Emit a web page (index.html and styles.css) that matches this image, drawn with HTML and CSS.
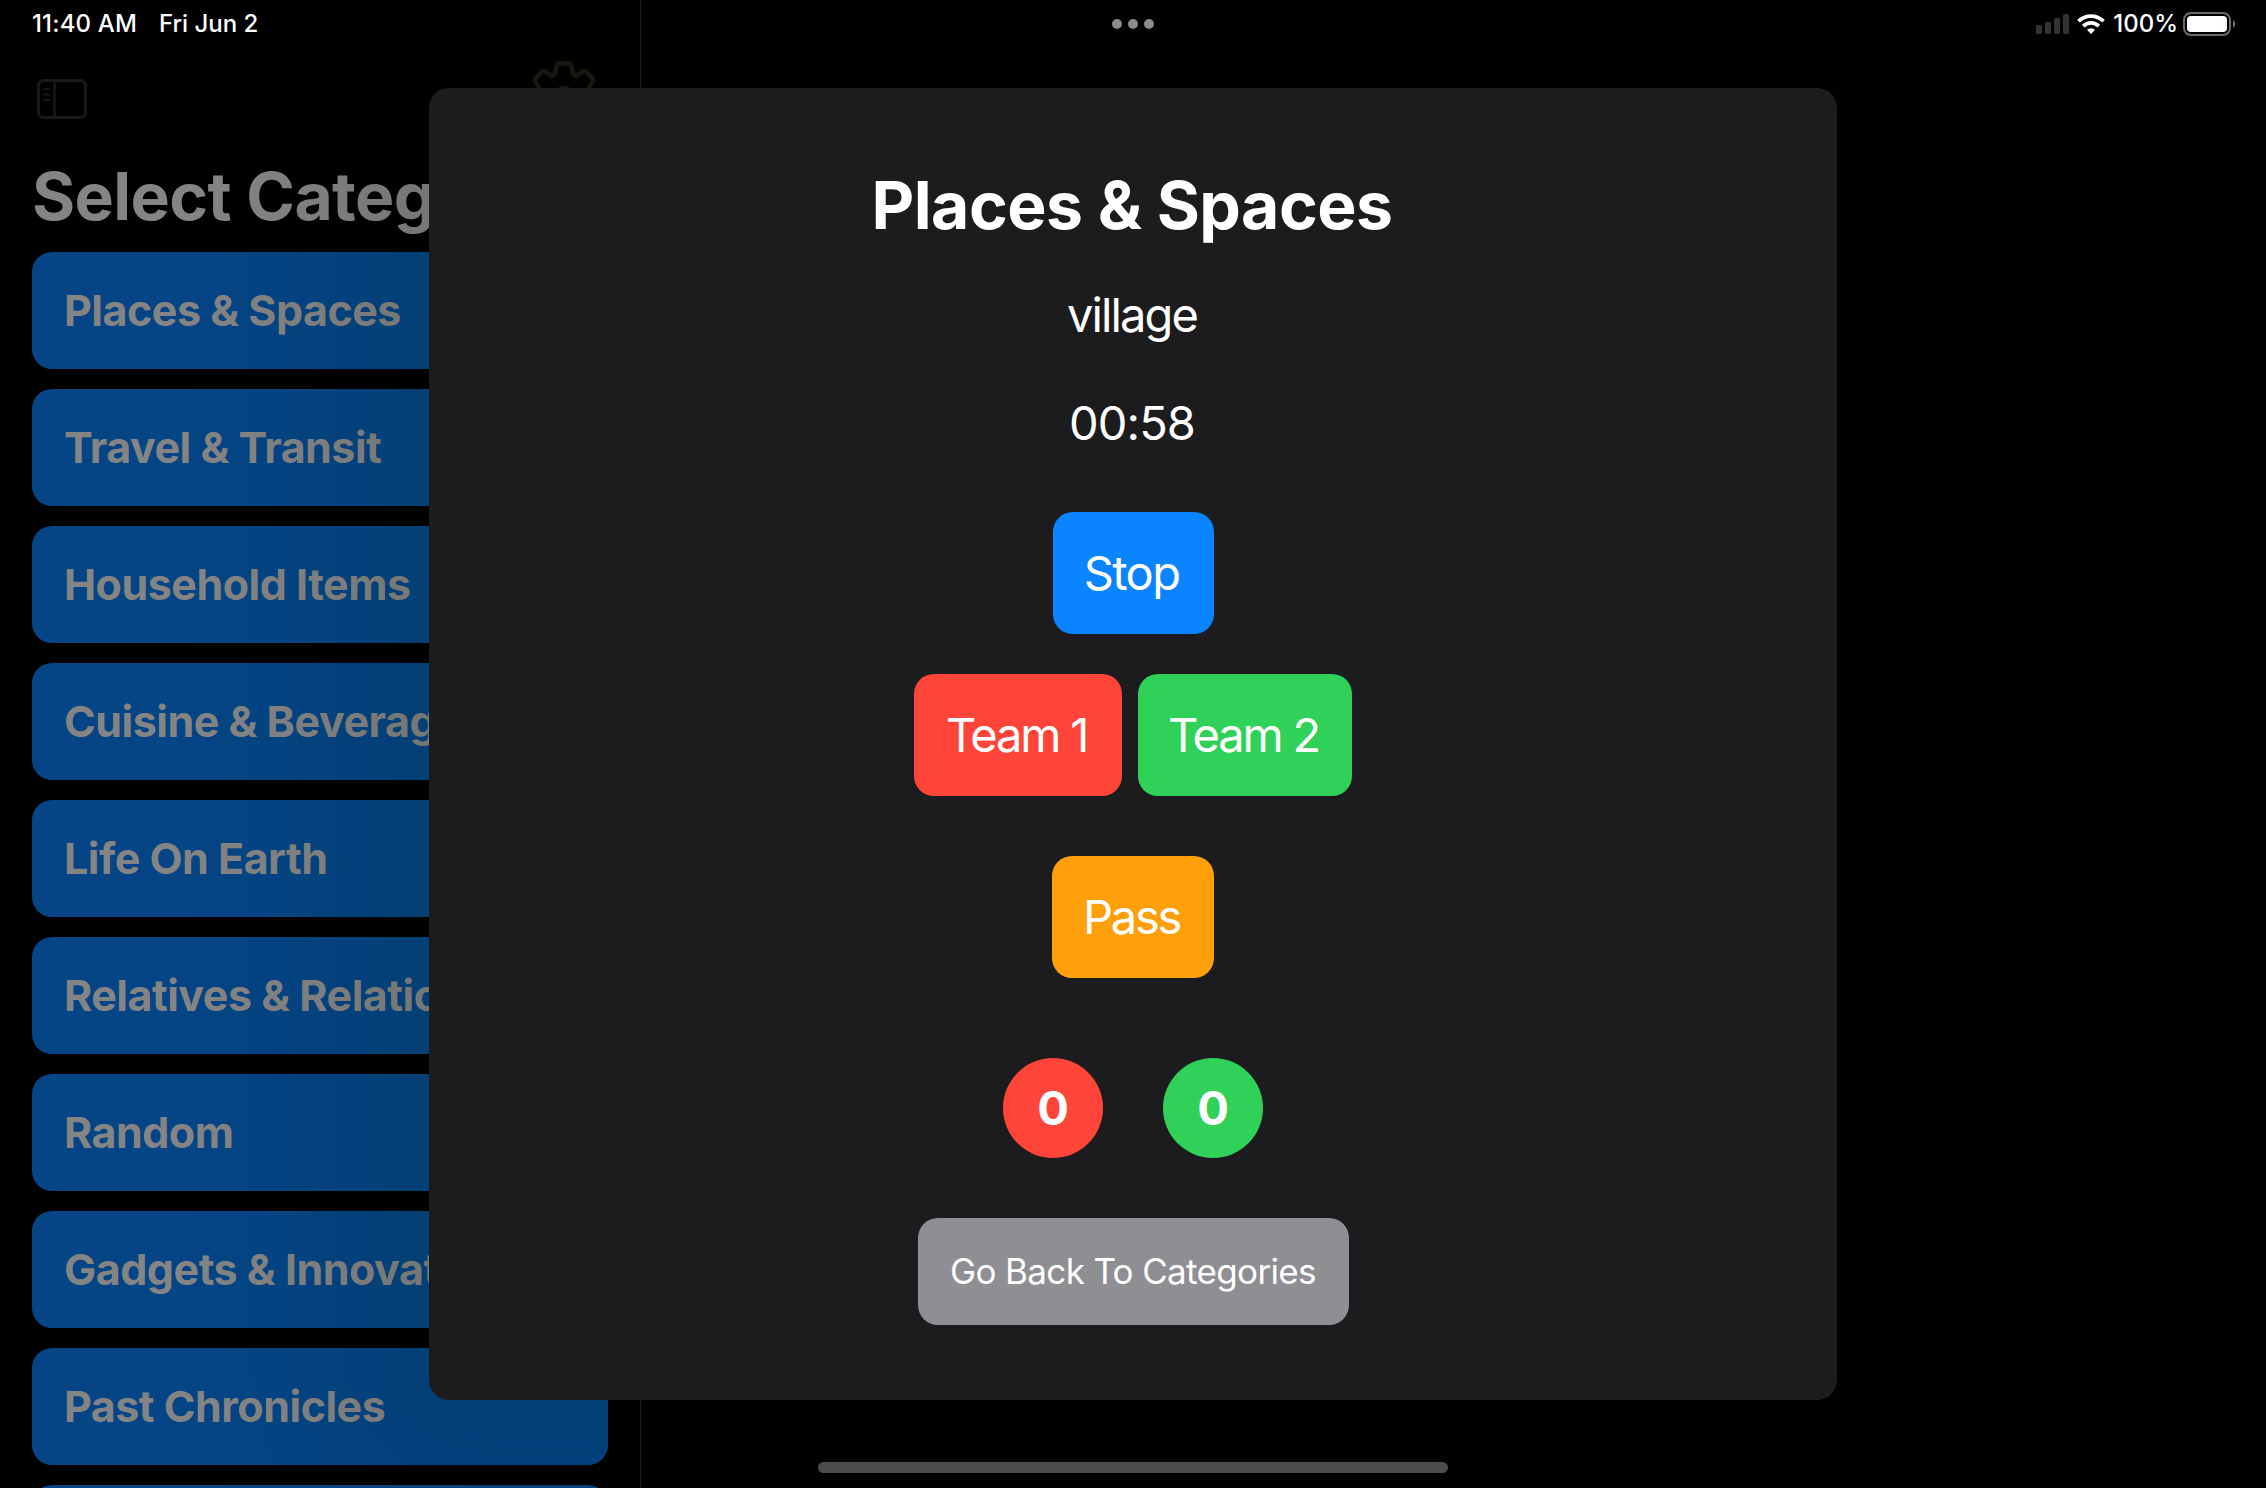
FILE: index.html
```html
<!DOCTYPE html>
<html lang="en">
<head>
<meta charset="utf-8">
<title>Places &amp; Spaces</title>
<link rel="stylesheet" href="styles.css">
</head>
<body>
<div class="screen">
  <aside class="sidebar">
    <div class="toolbar">
      <svg class="icon-sidebar" width="52" height="42" viewBox="0 0 52 42" fill="none" stroke="#191919" stroke-width="3">
        <rect x="2.5" y="2.5" width="47" height="37" rx="5"/>
        <path d="M18.5 3v36" stroke-width="2.5"/>
        <path d="M8 11h5M8 16.500h5M8 22h5" stroke-width="2.200" stroke-linecap="round"/>
      </svg>
      <svg class="icon-gear" width="64" height="64" viewBox="-32 -32 64 64" fill="none" stroke="#181a14" stroke-width="4.500" stroke-linejoin="round">
        <path d="M-5 -29.500H5Q7 -29.500 7.500 -27L9.500 -18.500L12 -17L19 -21.500Q21 -23 22.500 -21L28.500 -14.500Q29.500 -13 28.500 -11L23.500 -3L29 6L24 19L12 18L8 29H-8L-12 18L-24 19L-29 6L-23.500 -3L-28.500 -11Q-29.500 -13 -28.500 -14.500L-22.500 -21Q-21 -23 -19 -21.500L-12 -17L-9.500 -18.500L-7.500 -27Q-7 -29.500 -5 -29.500Z"/>
        <circle cy="3" r="8"/>
      </svg>
    </div>
    <h1 class="heading">Select Categories</h1>
    <nav class="categories">
      <a class="category">Places &amp; Spaces</a>
      <a class="category">Travel &amp; Transit</a>
      <a class="category">Household Items</a>
      <a class="category">Cuisine &amp; Beverages</a>
      <a class="category">Life On Earth</a>
      <a class="category">Relatives &amp; Relationships</a>
      <a class="category">Random</a>
      <a class="category">Gadgets &amp; Innovations</a>
      <a class="category">Past Chronicles</a>
      <a class="category"></a>
    </nav>
  </aside>

  <main class="modal">
    <h2 class="title">Places &amp; Spaces</h2>
    <div class="word">village</div>
    <div class="timer">00:58</div>
    <button class="btn stop">Stop</button>
    <div class="teams">
      <button class="btn team1">Team 1</button>
      <button class="btn team2">Team 2</button>
    </div>
    <button class="btn pass">Pass</button>
    <div class="scores"><div class="score red">0</div><div class="score green">0</div></div>
    <button class="btn back">Go Back To Categories</button>
  </main>

  <header class="status">
    <div class="status-side"><span class="time">11:40 AM</span><span class="date">Fri Jun 2</span></div>
    <div class="dots"><i></i><i></i><i></i></div>
    <div class="status-side status-right">
      <svg class="signal" width="33" height="20" fill="#333"><rect y="11" width="6" height="9" rx="1.500"/><rect x="9" y="8" width="6" height="12" rx="1.500"/><rect x="18" y="4" width="6" height="16" rx="1.500"/><rect x="27" width="6" height="20" rx="1.500"/></svg>
      <svg class="wifi" width="28" height="20" viewBox="0 0 28 20" fill="none" stroke="#fff" stroke-width="3.800"><path d="M1.500 7.200a17.800 17.800 0 0 1 25 0"/><path d="M6.200 12.200a11 11 0 0 1 15.600 0"/><path d="M14 20l-4-4.200a5.800 5.800 0 0 1 8 0z" fill="#fff" stroke="none"/></svg>
      <span class="percent">100%</span>
      <svg class="battery" width="53" height="24"><rect x="1" y="1" width="46" height="22" rx="7" fill="none" stroke="#6a6a6a" stroke-width="2"/><rect x="4" y="4" width="40" height="16" rx="4" fill="#fff"/><path d="M50 8a4.500 4.500 0 0 1 0 8z" fill="#6a6a6a"/></svg>
    </div>
  </header>
  <div class="home"></div>
</div>
</body>
</html>
```
FILE: styles.css
```css
* { box-sizing: border-box; margin: 0; }
body { background: #000; font-family: Inter, "Liberation Sans", sans-serif; color: #fff; }
.screen { position: relative; width: 2266px; height: 1488px; overflow: hidden; display: flex; background: #000; }
.sidebar { width: 641px; height: 1488px; overflow: hidden; border-right: 1px solid #1c1d1c; padding: 0 32px; flex: none; }
.toolbar { height: 160px; display: flex; justify-content: space-between; padding: 61px 12px 0 4px; }
.icon-sidebar { margin-top: 17px; }
.heading { height: 92px; line-height: 73px; font-size: 66px; font-weight: 700; color: #848484; white-space: nowrap; letter-spacing: -0.6px; }
.categories { display: flex; flex-direction: column; gap: 20px; }
.category { flex: none; height: 117px; border-radius: 20px; background: #054585; padding-left: 32px; line-height: 116px; font-size: 43px; font-weight: 700; color: #848484; white-space: nowrap; letter-spacing: -0.5px; }

.status { position: absolute; top: 0; left: 0; right: 0; height: 48px; padding: 0 32px; display: grid; grid-template-columns: 1fr auto 1fr; align-items: center; font-size: 24px; font-weight: 500; line-height: 48px; letter-spacing: 0.15px; }
.status-side { display: flex; align-items: center; }
.date { margin-left: 22px; letter-spacing: 0; }
.status-right { justify-content: flex-end; letter-spacing: 0; }
.dots { display: flex; gap: 6px; }
.dots i { width: 10px; height: 10px; border-radius: 50%; background: #8b8d89; }
.wifi { margin: 0 8px; }
.battery { margin: 0 -2px 0 5px; }

.modal { position: absolute; left: 429px; top: 88px; width: 1408px; height: 1312px; border-radius: 20px; background: #1c1c1e; box-shadow: 0 0 160px 90px rgba(4, 24, 0, 0.13); display: flex; flex-direction: column; align-items: center; padding-top: 77px; }
.title { height: 80px; line-height: 80px; font-size: 66px; font-weight: 700; letter-spacing: -0.5px; text-indent: -2px; }
.word, .timer { height: 58px; line-height: 58px; font-size: 47px; font-weight: 400; text-indent: -2px; }
.word { margin-top: 41px; letter-spacing: -1.9px; }
.timer { margin-top: 50px; letter-spacing: -0.9px; }
.btn { border: 0; padding: 0; border-radius: 20px; height: 122px; font: 400 47px/122px Inter, sans-serif; letter-spacing: -2.2px; text-indent: -3px; color: #fff; white-space: nowrap; text-align: center; flex: none; }
.stop { width: 161px; margin-top: 60px; background: #0a84ff; letter-spacing: -1.6px; }
.teams { display: flex; gap: 16px; margin-top: 40px; }
.team1 { width: 208px; background: #ff453a; }
.team2 { width: 214px; background: #30d158; }
.pass { width: 162px; margin-top: 60px; background: #ff9f0a; }
.scores { display: flex; gap: 60px; margin-top: 80px; }
.score { width: 100px; height: 100px; border-radius: 50%; text-align: center; font-size: 47px; line-height: 100px; font-weight: 700; }
.red { background: #ff453a; }
.green { background: #30d158; }
.back { width: 431px; height: 107px; margin-top: 60px; background: #8e8e93; font-size: 35px; line-height: 107px; letter-spacing: -0.65px; text-indent: 0; }
.home { position: absolute; left: 818px; top: 1462px; width: 630px; height: 11px; border-radius: 6px; background: #4c4c4c; }
```
